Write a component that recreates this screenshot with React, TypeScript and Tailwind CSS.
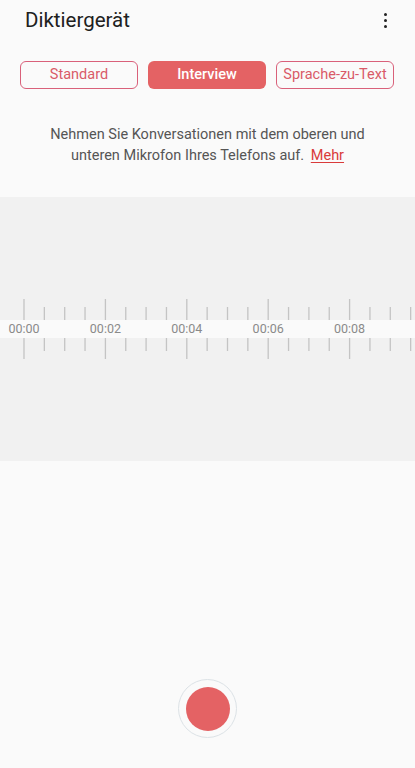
import React from "react";

const SPACING = 81.4 / 4;
const START = 24;

function Ruler() {
  const ticks: JSX.Element[] = [];
  for (let i = 0; i < 20; i++) {
    const x = START + i * SPACING;
    if (x > 420) break;
    const major = i % 4 === 0;
    ticks.push(
      <g key={i}>
        <line x1={x} x2={x} y1={major ? 0 : 8} y2={21} stroke="#c4c4c4" strokeWidth={1.3} />
        <line x1={x} x2={x} y1={39} y2={major ? 60 : 52} stroke="#c4c4c4" strokeWidth={1.3} />
      </g>
    );
  }
  const labels = ["00:00", "00:02", "00:04", "00:06", "00:08"];
  return (
    <div className="relative h-[60px] w-full">
      <svg className="absolute inset-0" width="415" height="60" viewBox="0 0 415 60">
        {ticks}
      </svg>
      <div className="absolute left-0 right-0 top-[21px] h-[18px] bg-[#fafafa] overflow-hidden">
        <div className="flex ml-[-16.7px] h-full items-center">
          {labels.map((l) => (
            <div key={l} className="w-[81.4px] shrink-0 text-center text-[12.5px] leading-none text-[#8a8a8a]">
              {l}
            </div>
          ))}
        </div>
      </div>
    </div>
  );
}

export default function App() {
  return (
    <div
      className="w-[415px] h-[768px] bg-[#fafafa] flex flex-col overflow-hidden"
      style={{ fontFamily: "Roboto, 'Noto Sans', sans-serif" }}
    >
      <div className="h-[40px] flex items-center justify-between pl-[25px] pr-[28px] pt-[1px]">
        <div className="text-[20.5px] text-[#202020]">Diktiergerät</div>
        <div className="flex flex-col gap-[2.5px] items-center">
          <span className="w-[3.5px] h-[3.5px] rounded-full bg-[#222]" />
          <span className="w-[3.5px] h-[3.5px] rounded-full bg-[#222]" />
          <span className="w-[3.5px] h-[3.5px] rounded-full bg-[#222]" />
        </div>
      </div>
      <div className="mt-[21px] flex gap-[10px] px-[20px]">
        <div className="w-[118px] h-[28px] rounded-[6px] border-[1.5px] border-[#d9607a] text-[#d95a68] text-[14.5px] flex items-center justify-center">
          Standard
        </div>
        <div className="w-[118px] h-[28px] rounded-[6px] bg-[#e46264] text-white text-[14.5px] font-medium flex items-center justify-center">
          Interview
        </div>
        <div className="w-[118px] h-[28px] rounded-[6px] border-[1.5px] border-[#d9607a] text-[#d95a68] text-[14.5px] flex items-center justify-center whitespace-nowrap">
          Sprache-zu-Text
        </div>
      </div>
      <div className="mt-[35px] text-center text-[14.5px] leading-[21px] text-[#555]">
        <div>Nehmen Sie Konversationen mit dem oberen und</div>
        <div>
          unteren Mikrofon Ihres Telefons auf.{" "}
          <span className="ml-[3px] text-[#d93a3a] underline underline-offset-2">Mehr</span>
        </div>
      </div>
      <div className="mt-[31px] h-[264px] bg-[#f1f1f1] flex flex-col justify-center">
        <Ruler />
      </div>
      <div className="flex-1 flex items-end justify-center pb-[30px]">
        <div className="w-[59px] h-[59px] rounded-full border border-[#dce2e6] flex items-center justify-center">
          <div className="w-[44px] h-[44px] rounded-full bg-[#e46264]" />
        </div>
      </div>
    </div>
  );
}
